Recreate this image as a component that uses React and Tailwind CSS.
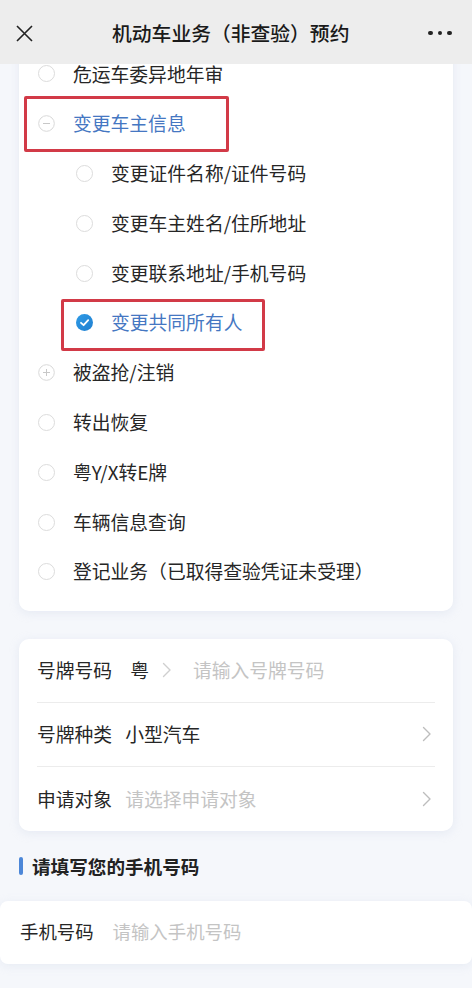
import React from "react";

const font = { fontFamily: '"Noto Sans CJK SC", "Noto Sans", sans-serif' };

function Radio() {
  return <span className="block w-[17px] h-[17px] rounded-full border border-[#dcdcdc] bg-white" />;
}
function MinusCircle() {
  return (
    <svg width="17" height="17" viewBox="0 0 17 17">
      <circle cx="8.5" cy="8.5" r="7.8" fill="none" stroke="#d8d8d8" strokeWidth="1" />
      <line x1="5" y1="8.5" x2="12" y2="8.5" stroke="#c8c8c8" strokeWidth="1" />
    </svg>
  );
}
function PlusCircle() {
  return (
    <svg width="17" height="17" viewBox="0 0 17 17">
      <circle cx="8.5" cy="8.5" r="7.8" fill="none" stroke="#d8d8d8" strokeWidth="1" />
      <line x1="5" y1="8.5" x2="12" y2="8.5" stroke="#c8c8c8" strokeWidth="1" />
      <line x1="8.5" y1="5" x2="8.5" y2="12" stroke="#c8c8c8" strokeWidth="1" />
    </svg>
  );
}
function Checked() {
  return (
    <svg width="17" height="17" viewBox="0 0 17 17">
      <defs>
        <linearGradient id="cg" x1="0" y1="0" x2="1" y2="1">
          <stop offset="0" stopColor="#2f9be6" />
          <stop offset="1" stopColor="#1f7fd0" />
        </linearGradient>
      </defs>
      <circle cx="8.5" cy="8.5" r="8.5" fill="url(#cg)" />
      <path d="M5 8.8 L7.6 11.2 L12.2 6.2" fill="none" stroke="#fff" strokeWidth="1.8" strokeLinecap="round" strokeLinejoin="round" />
    </svg>
  );
}
function Chevron({ color = "#bdbdbd" }) {
  return (
    <svg width="10" height="16" viewBox="0 0 10 16">
      <path d="M1.5 1.5 L8 8 L1.5 14.5" fill="none" stroke={color} strokeWidth="1.4" strokeLinecap="round" strokeLinejoin="round" />
    </svg>
  );
}

function Row({ level = 1, icon, text, blue }) {
  return (
    <div className={`h-[49.8px] flex items-center ${level === 2 ? "pl-[57px]" : "pl-[19px]"}`}>
      <span className="w-[17px] h-[17px] flex items-center justify-center shrink-0">{icon}</span>
      <span className={`ml-[18px] text-[18.8px] leading-none whitespace-nowrap ${blue ? "text-[#4577c2]" : "text-[#262626]"}`}>{text}</span>
    </div>
  );
}

export default function App() {
  return (
    <div className="w-[472px] h-[988px] overflow-hidden bg-[#f5f7fb] flex flex-col" style={font}>
      <div className="relative z-10 h-[64px] shrink-0 bg-[#ededed] flex items-center justify-between px-[16px]">
        <svg width="17" height="17" viewBox="0 0 17 17" className="mt-[2px]">
          <path d="M1 1 L16 16 M16 1 L1 16" stroke="#222" strokeWidth="1.6" />
        </svg>
        <span className="text-[19.8px] font-medium text-[#1a1a1a] mt-[2px]">机动车业务（非查验）预约</span>
        <div className="flex gap-[5px] items-center mr-[4px] mt-[2px]">
          <span className="w-[4.5px] h-[4.5px] rounded-full bg-[#222]" />
          <span className="w-[4.5px] h-[4.5px] rounded-full bg-[#222]" />
          <span className="w-[4.5px] h-[4.5px] rounded-full bg-[#222]" />
        </div>
      </div>

      <div className="-mt-[15px] flex flex-col">
        <div className="mx-[19px] bg-white rounded-b-[10px] shadow-[0_2px_10px_rgba(200,210,230,0.35)] pb-[14px] relative">
          <Row icon={<Radio />} text="危运车委异地年审" />
          <div className="relative">
            <div className="absolute left-[5px] top-[-3px] w-[205px] h-[56px] border-[3px] border-[#d23a47] rounded-[2px] pointer-events-none" />
            <Row icon={<MinusCircle />} text="变更车主信息" blue />
          </div>
          <Row level={2} icon={<Radio />} text="变更证件名称/证件号码" />
          <Row level={2} icon={<Radio />} text="变更车主姓名/住所地址" />
          <Row level={2} icon={<Radio />} text="变更联系地址/手机号码" />
          <div className="relative">
            <div className="absolute left-[42px] top-[1px] w-[204px] h-[52px] border-[3px] border-[#d23a47] rounded-[2px] pointer-events-none" />
            <Row level={2} icon={<Checked />} text="变更共同所有人" blue />
          </div>
          <Row icon={<PlusCircle />} text="被盗抢/注销" />
          <Row icon={<Radio />} text="转出恢复" />
          <Row icon={<Radio />} text="粤Y/X转E牌" />
          <Row icon={<Radio />} text="车辆信息查询" />
          <Row icon={<Radio />} text="登记业务（已取得查验凭证未受理）" />
        </div>

        <div className="mx-[19px] mt-[28px] bg-white rounded-[10px] shadow-[0_2px_10px_rgba(200,210,230,0.35)] px-[18px]">
          <div className="h-[64px] flex items-center border-b border-[#ececec] text-[18.8px]">
            <span className="text-[#262626]">号牌号码</span>
            <span className="ml-[18px] text-[#262626]">粤</span>
            <span className="ml-[13px] flex items-center"><Chevron color="#cfcfcf" /></span>
            <span className="ml-[21px] text-[#c4c4c4]">请输入号牌号码</span>
          </div>
          <div className="h-[64px] flex items-center border-b border-[#ececec] text-[18.8px]">
            <span className="text-[#262626]">号牌种类</span>
            <span className="ml-[13px] text-[#262626]">小型汽车</span>
            <span className="ml-auto mr-[3px] flex items-center"><Chevron /></span>
          </div>
          <div className="h-[64px] flex items-center text-[18.8px]">
            <span className="text-[#262626]">申请对象</span>
            <span className="ml-[13px] text-[#c4c4c4]">请选择申请对象</span>
            <span className="ml-auto mr-[3px] flex items-center"><Chevron /></span>
          </div>
        </div>

        <div className="h-[70px] flex items-center pl-[19px]">
          <span className="w-[4px] h-[18px] rounded-full bg-[#4c87d8]" />
          <span className="ml-[9px] text-[18.6px] font-bold text-[#222]">请填写您的手机号码</span>
        </div>

        <div className="bg-white rounded-[8px] h-[63px] flex items-center px-[20px] text-[18.4px] shadow-[0_2px_10px_rgba(200,210,230,0.3)]">
          <span className="text-[#262626]">手机号码</span>
          <span className="ml-[19px] text-[#c4c4c4]">请输入手机号码</span>
        </div>
      </div>
    </div>
  );
}
